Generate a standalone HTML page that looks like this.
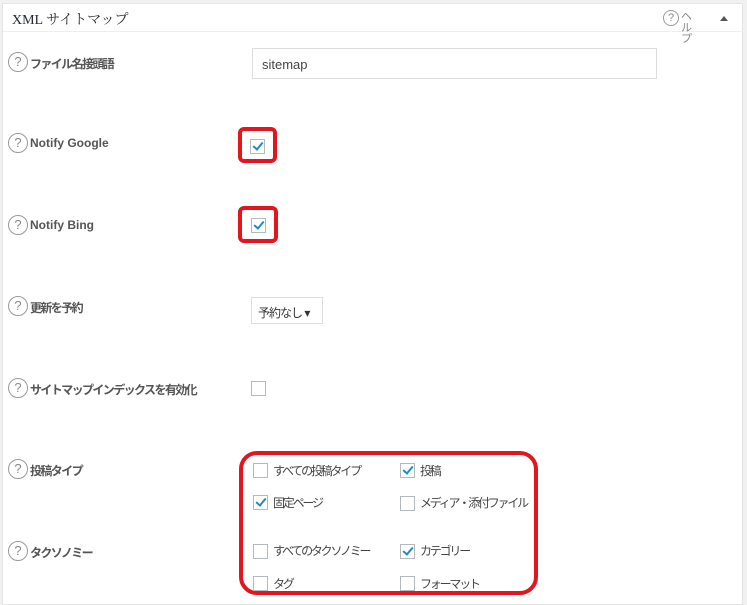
<!DOCTYPE html>
<html><head><meta charset="utf-8"><style>
body{margin:0;width:747px;height:597px;background:#f1f1f1;position:relative;overflow:hidden;font-family:"Liberation Sans","Noto Sans CJK JP",sans-serif;}
.panel{position:absolute;left:2px;top:3px;width:739px;height:600px;background:#fff;border:1px solid #e5e5e5;}
.hdr{position:absolute;left:0;top:0;width:739px;height:27px;border-bottom:1px solid #eee;}
.a{position:absolute;}
.title{left:9px;top:5px;font-family:"Liberation Serif","Noto Serif CJK SC",serif;font-size:14px;color:#23282d;}
.q{position:absolute;width:18px;height:18px;border:1px solid #999;border-radius:50%;font-size:13px;color:#888;text-align:center;line-height:18px;}
.lbl{position:absolute;left:30px;font-size:12px;font-weight:bold;color:#555;}
.j{letter-spacing:-1.6px;}
.cb{position:absolute;width:13px;height:13px;border:1px solid #b4b9be;background:#fff;}
.cb.on::after{content:"";position:absolute;left:4px;top:0px;width:4px;height:8px;border:solid #1e8cbe;border-width:0 2px 2px 0;transform:rotate(40deg);}
.t{position:absolute;font-size:12px;color:#444;letter-spacing:-2.2px;}
.red{position:absolute;border:4px solid #e3151f;box-sizing:border-box;}
</style></head><body>
<div class="panel">
<div class="hdr"><div class="a title">XML サイトマップ</div>
<div class="q" style="left:660px;top:6px;width:14px;height:14px;line-height:14px;font-size:11px">?</div>
<div class="a" style="left:678px;top:8px;font-size:11px;color:#888;width:10px;line-height:11px">ヘルプ</div>
<div class="a" style="left:717px;top:12px;width:0;height:0;border-left:4px solid transparent;border-right:4px solid transparent;border-bottom:5px solid #555"></div>
</div>
</div>
<div class="q" style="left:8px;top:52px">?</div><div class="lbl j" style="top:55px">ファイル名接頭語</div>
<div class="a" style="left:252px;top:48px;box-sizing:border-box;width:405px;height:31px;border:1px solid #ddd;font-size:13px;color:#444;padding:8px 0 0 9px">sitemap</div>

<div class="q" style="left:8px;top:133px">?</div><div class="lbl" style="top:136px">Notify Google</div>
<div class="red" style="left:238px;top:127px;width:39px;height:36px;border-radius:6px"></div>
<div class="cb on" style="left:250px;top:139px"></div>

<div class="q" style="left:8px;top:215px">?</div><div class="lbl" style="top:218px">Notify Bing</div>
<div class="red" style="left:238px;top:206px;width:40px;height:37px;border-radius:6px"></div>
<div class="cb on" style="left:251px;top:218px"></div>

<div class="q" style="left:8px;top:296px">?</div><div class="lbl j" style="top:299px">更新を予約</div>
<div class="a" style="left:251px;top:297px;width:72px;height:27px;border:1px solid #ddd;box-sizing:border-box;font-size:12px;color:#333;padding:6px 0 0 6px;letter-spacing:-1px">予約なし ▾</div>

<div class="q" style="left:8px;top:378px">?</div><div class="lbl j" style="top:381px">サイトマップインデックスを有効化</div>
<div class="cb" style="left:251px;top:381px"></div>

<div class="q" style="left:8px;top:459px">?</div><div class="lbl j" style="top:462px">投稿タイプ</div>
<div class="q" style="left:8px;top:541px">?</div><div class="lbl j" style="top:544px">タクソノミー</div>
<div class="red" style="left:239px;top:451px;width:299px;height:144px;border-radius:18px"></div>
<div class="cb" style="left:253px;top:463px"></div><div class="t" style="left:273px;top:462px">すべての投稿タイプ</div>
<div class="cb on" style="left:400px;top:463px"></div><div class="t" style="left:420px;top:462px">投稿</div>
<div class="cb on" style="left:253px;top:495px"></div><div class="t" style="left:273px;top:494px">固定ページ</div>
<div class="cb" style="left:400px;top:496px"></div><div class="t" style="left:420px;top:494px">メディア・添付ファイル</div>
<div class="cb" style="left:253px;top:544px"></div><div class="t" style="left:273px;top:542px">すべてのタクソノミー</div>
<div class="cb on" style="left:400px;top:544px"></div><div class="t" style="left:420px;top:542px">カテゴリー</div>
<div class="cb" style="left:253px;top:576px"></div><div class="t" style="left:273px;top:575px">タグ</div>
<div class="cb" style="left:400px;top:576px"></div><div class="t" style="left:420px;top:575px">フォーマット</div>
</body></html>
